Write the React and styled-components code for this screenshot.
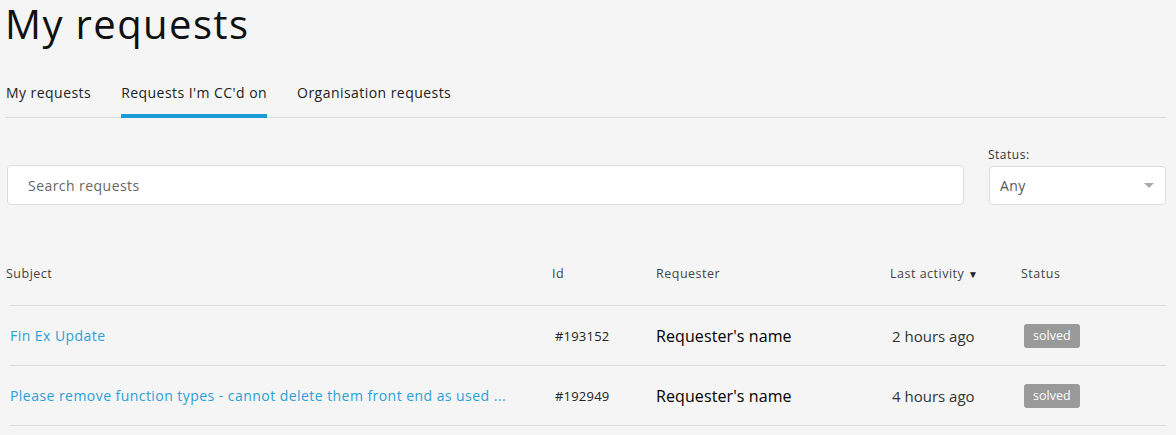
import React from "react"
import styled, { createGlobalStyle } from "styled-components"

const GlobalStyle = createGlobalStyle`
  html, body {
    margin: 0;
    padding: 0;
    background: #f5f5f5;
    font-family: "Open Sans", "Liberation Sans", sans-serif;
    color: #222;
  }
  * { box-sizing: border-box; }
`

const tabs = ["My requests", "Requests I'm CC'd on", "Organisation requests"]

const requests = [
  { subject: "Fin Ex Update", id: "#193152", requester: "Requester's name", time: "2 hours ago", status: "solved" },
  {
    subject: "Please remove function types - cannot delete them front end as used ...",
    id: "#192949",
    requester: "Requester's name",
    time: "4 hours ago",
    status: "solved",
  },
]

const App = () => {
  return (
    <>
      <GlobalStyle />
      <Page>
        <Title>My requests</Title>
        <TabBar>
          {tabs.map((t, i) => (
            <Tab key={t} active={i === 1}>
              {t}
            </Tab>
          ))}
        </TabBar>

        <Filters>
          <SearchInput placeholder="Search requests" />
          <StatusField>
            <FieldLabel>Status:</FieldLabel>
            <Select>
              <span>Any</span>
              <Caret />
            </Select>
          </StatusField>
        </Filters>

        <HeadRow>
          <HeadCell>Subject</HeadCell>
          <HeadCell>Id</HeadCell>
          <HeadCell>Requester</HeadCell>
          <HeadCell>
            Last activity <SortArrow>▼</SortArrow>
          </HeadCell>
          <HeadCell>Status</HeadCell>
        </HeadRow>

        <Body>
          {requests.map(r => (
            <Row key={r.id}>
              <SubjectLink href="#">{r.subject}</SubjectLink>
              <IdCell>{r.id}</IdCell>
              <RequesterCell>{r.requester}</RequesterCell>
              <TimeCell>{r.time}</TimeCell>
              <div>
                <Badge>{r.status}</Badge>
              </div>
            </Row>
          ))}
        </Body>
      </Page>
    </>
  )
}

const Page = styled.div`
  width: 1166px;
  padding-left: 5px;
  padding-top: 2px;
`

const Title = styled.h1`
  margin: 0;
  font-size: 40px;
  font-weight: 400;
  line-height: 44px;
  letter-spacing: 1.4px;
  color: #111;
`

const TabBar = styled.div`
  display: flex;
  gap: 30px;
  margin-top: 33px;
  border-bottom: 1px solid #dcdcdc;
  padding-left: 1px;
`

const Tab = styled.div`
  font-size: 14px;
  line-height: 20px;
  letter-spacing: 0.45px;
  color: #222;
  padding: 4px 0 11px;
  border-bottom: 4px solid ${props => (props.active ? "#1a9ad6" : "transparent")};
  margin-bottom: -1px;
`

const Filters = styled.div`
  display: flex;
  align-items: flex-end;
  gap: 25px;
  margin-top: 29px;
  padding-left: 2px;
`

const SearchInput = styled.input`
  flex: 1;
  height: 40px;
  border: 1px solid #dcdcdc;
  border-radius: 4px;
  background: #fff;
  padding: 0 20px;
  font-family: "Open Sans", "Liberation Sans", sans-serif;
  font-size: 14px;
  letter-spacing: 0.45px;
  color: #333;
  outline: none;

  &::placeholder {
    color: #666;
  }
`

const StatusField = styled.div`
  display: flex;
  flex-direction: column;
  width: 177px;
`

const FieldLabel = styled.label`
  font-size: 12px;
  line-height: 16px;
  letter-spacing: 0.5px;
  color: #333;
  margin-bottom: 3px;
  margin-left: -1px;
`

const Select = styled.div`
  height: 39px;
  border: 1px solid #dcdcdc;
  border-radius: 4px;
  background: #fff;
  display: flex;
  align-items: center;
  justify-content: space-between;
  padding: 0 10px;
  font-size: 14px;
  letter-spacing: 0.45px;
  color: #555;
`

const Caret = styled.span`
  width: 0;
  height: 0;
  border-left: 5px solid transparent;
  border-right: 5px solid transparent;
  border-top: 5px solid #aaa;
  margin-right: 1px;
`

const HeadRow = styled.div`
  display: grid;
  grid-template-columns: 546px 104px 234px 131px 1fr;
  margin-top: 60px;
  padding-left: 1px;
  padding-bottom: 22px;
`

const HeadCell = styled.div`
  font-size: 12.5px;
  line-height: 18px;
  letter-spacing: 0.5px;
  color: #444;
`

const SortArrow = styled.span`
  font-size: 10px;
  color: #222;
`

const Body = styled.div`
  margin-left: 5px;
  border-top: 1px solid #dcdcdc;
`

const Row = styled.div`
  display: grid;
  grid-template-columns: 545px 101px 236px 132px 1fr;
  align-items: center;
  height: 60px;
  border-bottom: 1px solid #dcdcdc;
`

const SubjectLink = styled.a`
  font-size: 14px;
  letter-spacing: 0.45px;
  color: #2a9fd8;
  text-decoration: none;
  white-space: nowrap;
  overflow: hidden;
`

const IdCell = styled.div`
  font-size: 13px;
  letter-spacing: 0.2px;
  color: #222;
`

const RequesterCell = styled.div`
  font-size: 16px;
  letter-spacing: 0.1px;
  color: #000;
`

const TimeCell = styled.div`
  font-size: 15px;
  color: #333;
`

const Badge = styled.span`
  display: inline-block;
  background: #999;
  color: #fff;
  font-size: 12.5px;
  line-height: 24px;
  padding: 0 9px;
  border-radius: 3px;
`

export default App
